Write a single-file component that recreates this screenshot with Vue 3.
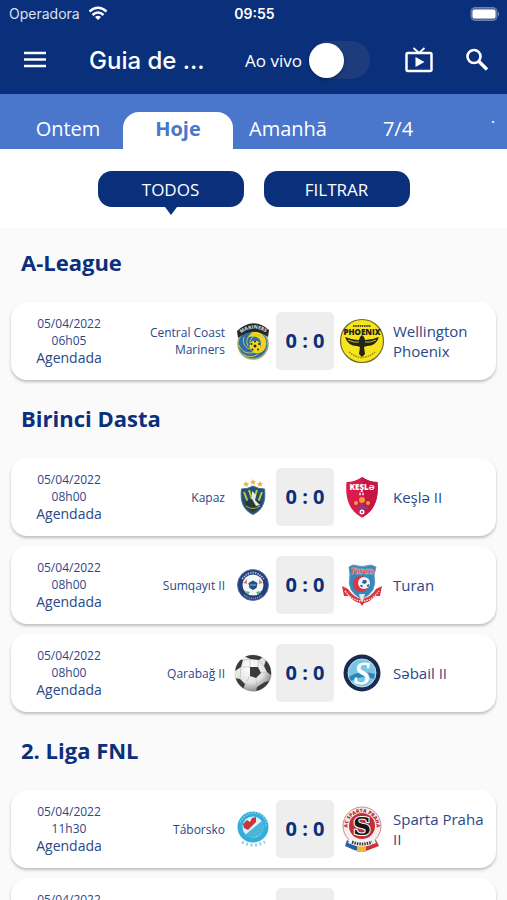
<script setup>
import { ref } from 'vue';

const liveOnly = ref(false);
const activeTab = ref('Hoje');
const activeFilter = ref('TODOS');

const tabs = ['Ontem', 'Hoje', 'Amanhã', '7/4', '˙'];
const filters = ['TODOS', 'FILTRAR'];

const leagues = [
  {
    name: 'A-League',
    matches: [
      { date: '05/04/2022', time: '06h05', status: 'Agendada', home: 'Central Coast Mariners', away: 'Wellington Phoenix', homeCrest: 'mariners', awayCrest: 'phoenix', score: '0 : 0' }
    ]
  },
  {
    name: 'Birinci Dasta',
    matches: [
      { date: '05/04/2022', time: '08h00', status: 'Agendada', home: 'Kapaz', away: 'Keşlə II', homeCrest: 'kapaz', awayCrest: 'kesle', score: '0 : 0' },
      { date: '05/04/2022', time: '08h00', status: 'Agendada', home: 'Sumqayıt II', away: 'Turan', homeCrest: 'sumqayit', awayCrest: 'turan', score: '0 : 0' },
      { date: '05/04/2022', time: '08h00', status: 'Agendada', home: 'Qarabağ II', away: 'Səbail II', homeCrest: 'ball', awayCrest: 'sebail', score: '0 : 0' }
    ]
  },
  {
    name: '2. Liga FNL',
    matches: [
      { date: '05/04/2022', time: '11h30', status: 'Agendada', home: 'Táborsko', away: 'Sparta Praha II', homeCrest: 'taborsko', awayCrest: 'sparta', score: '0 : 0' },
      { date: '05/04/2022', time: '', status: '', home: '', away: '', homeCrest: '', awayCrest: '', score: '' }
    ]
  }
];
</script>

<template>
  <div class="app">
    <header class="header">
      <div class="status-bar">
        <div class="carrier">
          <span>Operadora</span>
          <svg width="20" height="15" viewBox="0 0 20 15" fill="none" stroke="#fff" stroke-width="2.500">
            <path d="M1.500 5.500 Q10 -2 18.500 5.500" />
            <path d="M4.500 9 Q10 4 15.500 9" />
            <path d="M7 11 Q10 8.500 13 11 L10 14Z" fill="#fff" stroke="none" />
          </svg>
        </div>
        <span class="clock">09:55</span>
        <div class="battery">
          <svg width="30" height="14" viewBox="0 0 30 14">
            <rect x="1" y="0.500" width="26" height="13" rx="4" fill="#50699f" stroke="#6c82ae" />
            <rect x="2.500" y="2.500" width="23" height="9" rx="2" fill="#fff" />
            <path d="M28 4.500 Q30.500 7 28 9.500Z" fill="#6c82ae" />
          </svg>
        </div>
      </div>

      <div class="toolbar">
        <button type="button" class="icon-btn menu-btn" aria-label="Menu">
          <svg width="24" height="18" viewBox="0 0 24 18" stroke="#fff" stroke-width="2.500">
            <path d="M1 2 H23 M1 8.500 H23 M1 15 H23" />
          </svg>
        </button>
        <h1 class="title">Guia de ...</h1>
        <label class="live" for="live">Ao vivo</label>
        <input id="live" v-model="liveOnly" type="checkbox" role="switch" class="switch" />
        <button type="button" class="icon-btn" aria-label="TV">
          <svg width="28" height="26" viewBox="0 0 28 26" fill="none" stroke="#fff">
            <rect x="1.500" y="6" width="25" height="18" rx="1.500" stroke-width="2.500" />
            <path d="M8.500 1 L14 6 L19.500 1" stroke-width="1.800" />
            <path d="M10.500 10 L19.500 15 L10.500 20Z" fill="#fff" stroke="none" />
          </svg>
        </button>
        <button type="button" class="icon-btn" aria-label="Buscar">
          <svg width="24" height="24" viewBox="0 0 24 24" fill="none" stroke="#fff">
            <circle cx="9" cy="8.500" r="6.500" stroke-width="2.600" />
            <path d="M13.500 13 L22 21.500" stroke-width="3.400" />
          </svg>
        </button>
      </div>
    </header>

    <nav class="tabs">
      <button v-for="tab in tabs" :key="tab" type="button" :class="['tab', { active: tab === activeTab }]" @click="activeTab = tab">
        {{ tab }}
      </button>
    </nav>

    <div class="filters">
      <button v-for="filter in filters" :key="filter" type="button" :class="['filter', { active: filter === activeFilter }]" @click="activeFilter = filter">
        {{ filter }}
      </button>
    </div>

    <main class="list">
      <section v-for="league in leagues" :key="league.name">
        <h2 class="league">{{ league.name }}</h2>
        <article v-for="(match, i) in league.matches" :key="i" class="card">
          <div class="when">
            <span>{{ match.date }}</span>
            <span>{{ match.time }}</span>
            <span class="state">{{ match.status }}</span>
          </div>
          <div class="home">{{ match.home }}</div>

          <svg class="crest" viewBox="0 0 46 46">
            <g v-if="match.homeCrest === 'mariners'">
              <circle cx="23" cy="26" r="15" fill="#2f6ea5" stroke="#a3a878" stroke-width="1.500" />
              <path d="M22 14 C31 11 38 20 36 28 C34 36 26 37 21 33 C27 34 31 31 31 26 C31 20 26 17 18 19 Z" fill="#f0d21f" />
              <g fill="none" stroke="#c6c65a" stroke-width="1">
                <path d="M22 31 C15 31 12 25 14 19" />
                <path d="M25 34 C17 37 11 33 9 27" />
                <path d="M20 25 C20 19 26 15 33 19" />
                <path d="M28 36 C23 40 16 39 13 36" />
                <path d="M18 28 C15 23 18 17 24 14" />
              </g>
              <circle cx="25" cy="28" r="5.500" fill="#f4d81f" />
              <g fill="#26251c">
                <circle cx="25" cy="28" r="1.500" /><circle cx="21.500" cy="26" r="1" /><circle cx="25" cy="23.500" r="1" />
                <circle cx="29" cy="26" r="1" /><circle cx="28" cy="31.500" r="1" /><circle cx="22.500" cy="31.500" r="1" />
              </g>
              <path d="M7 13 Q23 -2 39 12 L38 19 Q23 8 8 20 Z" fill="#25272a" />
              <path id="bannerArc" d="M9 17 Q23 5 38 16" fill="none" />
              <text class="crest-text" font-size="5" fill="#c9ccce"><textPath href="#bannerArc" startOffset="50%" text-anchor="middle">MARINERS</textPath></text>
            </g>
            <g v-else-if="match.homeCrest === 'kapaz'">
              <g fill="#efb63a">
                <path d="M16 7 l1 2 2 .2 -1.500 1.500 .5 2 -2 -1 -2 1 .5 -2 -1.500 -1.500 2 -.2z" />
                <path d="M23 5 l1 2 2 .2 -1.500 1.500 .5 2 -2 -1 -2 1 .5 -2 -1.500 -1.500 2 -.2z" />
                <path d="M30 7 l1 2 2 .2 -1.500 1.500 .5 2 -2 -1 -2 1 .5 -2 -1.500 -1.500 2 -.2z" />
              </g>
              <path d="M11.500 15 Q18 15 23 12 Q28 15 34.500 15 C36 27 33 36 23 40.500 C13 36 10 27 11.500 15Z" fill="#254f70" stroke="#3c719c" />
              <path d="M14 18 L19 31 M19 16 L22 25 M32 18 L27 31 M27 16 L24 25" stroke="#bacb42" stroke-width="2" />
              <path d="M15 28 Q22 22 31 28 Q29 35 23 38 Q17 35 15 28Z" fill="#28383a" />
              <path d="M22 17 L26 21 L25 26 L30 31 L26 32 L22 25Z" fill="#e2e9e3" />
              <path d="M16 32 Q23 37 30 32" stroke="#9eb848" fill="none" />
            </g>
            <g v-else-if="match.homeCrest === 'sumqayit'">
              <circle cx="23" cy="23" r="15.500" fill="#253e78" stroke="#5270a5" stroke-width="0.800" />
              <circle cx="23" cy="23" r="10.500" fill="#f2f7f7" />
              <path d="M13 21 L17 17 L17 22Z M33 21 L29 17 L29 22Z" fill="#de8278" />
              <path d="M15 29 L20 30 L18 33Z M31 29 L26 30 L28 33Z" fill="#65ad8c" />
              <path d="M23 18.500 L27.500 21 L26.500 26 L23 28 L19.500 26 L18.500 21Z" fill="#244f81" />
              <path d="M20 23 H26" stroke="#4a9fc4" stroke-width="1.500" />
              <path d="M12 17 Q23 4 34 17" fill="none" stroke="#a9b9d7" stroke-width="1.800" stroke-dasharray="1.500 1" />
              <path d="M14 33 Q23 40 32 33" fill="none" stroke="#8fa3cc" stroke-width="1.500" stroke-dasharray="1 1" />
            </g>
            <g v-else-if="match.homeCrest === 'ball'">
              <defs>
                <radialGradient id="ballShade" cx="40%" cy="35%" r="65%">
                  <stop offset="0" stop-color="#ffffff" />
                  <stop offset="0.650" stop-color="#e2e2e2" />
                  <stop offset="1" stop-color="#8c8c8c" />
                </radialGradient>
                <clipPath id="ballClip"><circle cx="23" cy="23" r="18" /></clipPath>
              </defs>
              <circle cx="23" cy="23" r="18.500" fill="url(#ballShade)" />
              <g clip-path="url(#ballClip)">
                <g fill="#3a3a3a">
                  <path d="M20 17 L28 17 L31 23 L26 28 L20 26Z" />
                  <path d="M14 6 L24 3 L33 7 L29 10 L20 9Z" />
                  <path d="M36 10 L43 16 L42 26 L37 22 L34 16Z" />
                  <path d="M4 14 L10 9 L13 10 L11 17 L5 21Z" />
                  <path d="M4 28 L10 29 L15 34 L13 40 L6 36Z" />
                  <path d="M27 37 L35 32 L39 31 L38 37 L30 42 L26 42Z" />
                </g>
                <path d="M20 9 L20 17 M29 10 L28 17 M29 10 L34 16 M13 10 L20 9 M11 17 L20 17 M31 23 L37 22 M26 28 L27 37 M35 32 L37 22 M20 26 L15 34 M15 34 L27 37 M10 29 L11 17" fill="none" stroke="#bcbcbc" stroke-width="0.700" />
              </g>
            </g>
            <g v-else-if="match.homeCrest === 'taborsko'">
              <circle cx="23" cy="21" r="15.500" fill="#32aeda" />
              <circle cx="23" cy="21" r="10.500" fill="#def2f7" />
              <path d="M15 29 L33 14 Q36 29 25 31 Q19 32 15 29Z" fill="#49b6d7" />
              <path d="M13 18 L17 14 L20 16 L22 12 L26 11 L26 16 L22 20 L18 24 L14 22Z" fill="#c73542" />
              <path d="M10 16 Q17 4 30 8 Q37 12 36 21" fill="none" stroke="#83d2e9" stroke-width="1.500" stroke-dasharray="1.500 1.500" />
              <path d="M12 36 Q23 42 35 36" fill="none" stroke="#8bd0e6" stroke-width="3" stroke-dasharray="2 2.500" />
            </g>
          </svg>

          <div class="score">{{ match.score }}</div>

          <svg class="crest" viewBox="0 0 46 46">
            <g v-if="match.awayCrest === 'phoenix'">
              <circle cx="23" cy="23" r="21.500" fill="#f7e51b" stroke="#6f6a2a" stroke-width="1.200" />
              <path d="M14 8 H32" stroke="#4c4a20" stroke-width="2" stroke-dasharray="1.500 0.700" />
              <text class="crest-text" x="23" y="17" font-size="8" text-anchor="middle" fill="#1d1c14">PHOENIX</text>
              <path d="M6 19 Q14 22 20 22 L21 19 L23 17 L25 19 L26 22 Q33 22 40 19 Q37 28 28 28 L25 29 L26 36 L23 39 L20 36 L21 29 L18 28 Q9 28 6 19 Z" fill="#24241c" />
              <path d="M9 22 Q15 25 20 24 M37 22 Q31 25 26 24" fill="none" stroke="#f7e51b" stroke-width="0.800" />
              <path d="M10 34 Q23 45 36 34" fill="none" stroke="#8e8426" stroke-width="1.500" stroke-dasharray="1.500 1" />
            </g>
            <g v-else-if="match.awayCrest === 'kesle'">
              <path d="M23 3 Q30 8 38.500 8 C40 24 36 37 23 43.500 C10 37 6 24 7.500 8 Q16 8 23 3Z" fill="#d91c4b" />
              <path d="M23 3 Q30 8 38.500 8 C40 24 36 37 23 43.500Z" fill="#c51646" />
              <text class="crest-text" x="23" y="16" font-size="8" text-anchor="middle" fill="#fff">KEŞLƏ</text>
              <path d="M20 20 H26" stroke="#f3b3c3" stroke-width="2.500" stroke-dasharray="2 1" />
              <g fill="#f29b35"><circle cx="17" cy="29" r="2" /><circle cx="23" cy="26" r="3" /><circle cx="29" cy="29" r="2" /></g>
              <path d="M16 32 L20 33 L23 29 L26 33 L30 32 L28 35 L18 35Z" fill="#8b3b86" />
              <circle cx="23" cy="38" r="2.500" fill="#fff" />
              <circle cx="23" cy="38" r="1" fill="#c51646" />
            </g>
            <g v-else-if="match.awayCrest === 'turan'">
              <path d="M10 5 L14 3 Q23 6 32 3 L37 5 L35 13 Q39 30 23 37 Q7 30 11 13Z" fill="#3588bd" stroke="#6a9bb9" />
              <text class="crest-text" x="23" y="12" font-size="8" font-style="italic" text-anchor="middle" fill="#e54343" stroke="#f7dcdc" stroke-width="0.300">Turan</text>
              <circle cx="22" cy="22" r="8" fill="#d63743" />
              <circle cx="25" cy="21" r="6" fill="#eaf3f8" />
              <path d="M24 18 l3 0 1 2 -2 2 -3 -1z M21 23 l2 0 1 2 -2 0z M28 23 l2 -1 0 2 -2 1z" fill="#345f88" />
              <path d="M3 24 L9 27 Q15 36 23 37 Q31 36 37 27 L43 24 L41 34 L36 34 Q31 40 25 41 L23 44 L21 41 Q15 40 10 34 L5 34Z" fill="#d8363e" />
              <path d="M6 29 Q13 39 23 39 Q33 39 40 29" fill="none" stroke="#f6dada" stroke-width="1.500" stroke-dasharray="1.500 1" />
              <path d="M20 32 H26 L24 39 H22Z" fill="#d7e8ef" />
            </g>
            <g v-else-if="match.awayCrest === 'sebail'">
              <circle cx="23" cy="23" r="18.500" fill="#192c50" />
              <circle cx="23" cy="23" r="14" fill="#79c6e4" stroke="#dceff6" stroke-width="0.800" />
              <path d="M10 27 Q19 20 36 24 L35 29 Q24 24 12 31Z" fill="#2b86b7" />
              <text class="script-text" x="23" y="34" font-size="31" text-anchor="middle" fill="#fff" stroke="#fff">S</text>
            </g>
            <g v-else-if="match.awayCrest === 'sparta'">
              <path d="M8 34 L15 38 V44 L6 40Z M15 38 L19 40 V45 L15 44Z" fill="#2462a6" />
              <path d="M18 39 H27 V46 H18Z" fill="#efb832" />
              <path d="M27 39 L37 34 L40 40 L27 45Z" fill="#c93435" />
              <circle cx="23" cy="20" r="19" fill="#f9eeee" stroke="#ba7070" stroke-width="0.800" />
              <circle cx="23" cy="20" r="13" fill="#bd3039" />
              <path id="ringArc" d="M11 29 A14.500 14.500 0 1 1 35 29" fill="none" />
              <text class="crest-text" font-size="5" fill="#b92733"><textPath href="#ringArc" startOffset="50%" text-anchor="middle">AC SPARTA PRAHA</textPath></text>
              <text class="slab-text" x="23" y="29" font-size="25" text-anchor="middle" fill="#171617" stroke="#fff" stroke-width="2" paint-order="stroke">S</text>
              <path d="M11 33 Q23 39 35 33 L37 37 Q23 44 9 37Z" fill="#f8f8f8" />
              <path d="M13 36 Q23 40 33 36" fill="none" stroke="#3b3838" stroke-width="3" stroke-dasharray="1.500 1" />
            </g>
          </svg>

          <div class="away">{{ match.away }}</div>
        </article>
      </section>
    </main>
  </div>
</template>

<style>
body { margin: 0; background: #fafafa; }
</style>

<style scoped>
.app { display: flex; flex-direction: column; height: 100vh; overflow: hidden; background: #fafafa; color: #0a2f7b; font-family: 'Open Sans', 'Noto Sans', sans-serif; }
.app * { box-sizing: border-box; }
button { border: none; padding: 0; background: none; font-family: inherit; cursor: pointer; }

.header { flex: none; background: #0a2f7b; color: #fff; }
.status-bar { display: grid; grid-template-columns: 1fr auto 1fr; align-items: center; height: 27px; padding: 0 7px 0 9px; font-family: Inter, sans-serif; font-size: 14px; }
.carrier { display: flex; align-items: center; gap: 8px; color: #dbe2f0; }
.clock { font-weight: 600; }
.battery { display: flex; justify-content: flex-end; }
.toolbar { display: flex; align-items: center; height: 67px; padding: 0 1px 1px 0; }
.icon-btn { display: flex; align-items: center; justify-content: center; flex: none; width: 58px; height: 48px; }
.menu-btn { width: 70px; }
.title { flex: 1; min-width: 0; margin: 0; padding-left: 19px; font-family: Inter, sans-serif; font-size: 24px; font-weight: 500; white-space: nowrap; }
.live { flex: none; margin-right: 7px; font-size: 17px; }
.switch { appearance: none; flex: none; display: flex; align-items: center; width: 61px; height: 38px; margin: 0 20px 0 0; border-radius: 19px; background: #1c3c7e; cursor: pointer; }
.switch::before { content: ''; width: 35px; height: 35px; border-radius: 50%; background: #fff; box-shadow: 0 1px 3px rgba(0, 0, 0, 0.4); }
.switch:checked { justify-content: flex-end; }

.tabs { display: flex; flex: none; align-items: flex-end; height: 55px; padding-left: 13px; overflow: hidden; background: #4a76cb; }
.tab { flex: none; width: 110px; height: 37px; color: #fff; font-size: 20px; line-height: 34px; padding-bottom: 3px; }
.tab:last-child { width: 80px; }
.tab.active { border-radius: 16px 16px 0 0; background: #fff; color: #4a76cb; font-weight: 700; }

.filters { display: flex; flex: none; justify-content: center; gap: 20px; height: 79px; padding-top: 22px; background: #fff; }
.filter { position: relative; width: 146px; height: 36px; border-radius: 14px; background: #0a2f7b; color: #fff; font-size: 17px; }
.filter.active::after { content: ''; position: absolute; top: 100%; left: 50%; margin-left: -6px; border: 6px solid transparent; border-top: 8px solid #0a2f7b; border-bottom: 0; }

.list { flex: 1; min-height: 0; padding-top: 1px; overflow-y: auto; scrollbar-width: none; }
.league { height: 68px; margin: 0; padding-left: 21px; font-size: 22px; font-weight: 700; line-height: 66px; }
.card { display: grid; grid-template-columns: 112px 1fr 46px 58px 55px 1fr; align-items: center; height: 78px; margin: 5px 11px 10px; border-radius: 16px; background: #fff; box-shadow: 0 2px 3px rgba(0, 0, 0, 0.24); }
.card:last-child { margin-bottom: 5px; }
.card + .card { margin-top: 0; }
.when { display: grid; grid-template-rows: 17px 17px 18px; padding-left: 4px; font-size: 12px; line-height: 17px; text-align: center; }
.state { font-size: 14px; line-height: 18px; }
.home { padding-right: 5px; font-size: 12px; line-height: 17px; text-align: right; }
.away { padding: 0 8px 0 4px; font-size: 15px; line-height: 20px; }
.when, .home, .away { color: #2a4889; }
.crest { width: 46px; height: 46px; justify-self: center; }
.score { height: 58px; border-radius: 5px; background: #eee; font-size: 20px; font-weight: 700; line-height: 58px; text-align: center; }
.crest-text { font-family: 'Open Sans', sans-serif; font-weight: 800; }
.script-text { font-family: 'Liberation Serif', serif; font-style: italic; }
.slab-text { font-family: 'DejaVu Serif', serif; font-weight: 700; }
</style>
